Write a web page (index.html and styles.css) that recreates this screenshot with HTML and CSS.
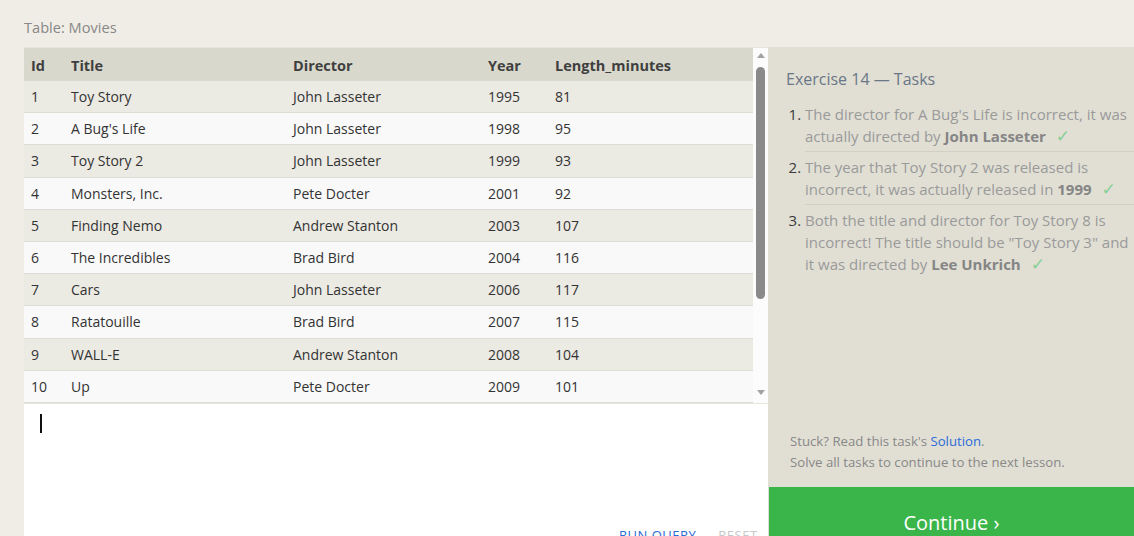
FILE: index.html
```html
<!DOCTYPE html>
<html>
<head>
<meta charset="utf-8">
<link rel="stylesheet" href="styles.css">
</head>
<body>
<div class="page">
  <div class="top">
    <div class="table-label">Table: Movies</div>
  </div>
  <div class="main">
    <div class="left">
      <div class="results">
        <table class="grid">
          <colgroup>
            <col class="c-id"><col class="c-title"><col class="c-dir"><col class="c-year"><col>
          </colgroup>
          <thead>
            <tr><th>Id</th><th>Title</th><th>Director</th><th>Year</th><th>Length_minutes</th></tr>
          </thead>
          <tbody>
            <tr><td>1</td><td>Toy Story</td><td>John Lasseter</td><td>1995</td><td>81</td></tr>
            <tr><td>2</td><td>A Bug's Life</td><td>John Lasseter</td><td>1998</td><td>95</td></tr>
            <tr><td>3</td><td>Toy Story 2</td><td>John Lasseter</td><td>1999</td><td>93</td></tr>
            <tr><td>4</td><td>Monsters, Inc.</td><td>Pete Docter</td><td>2001</td><td>92</td></tr>
            <tr><td>5</td><td>Finding Nemo</td><td>Andrew Stanton</td><td>2003</td><td>107</td></tr>
            <tr><td>6</td><td>The Incredibles</td><td>Brad Bird</td><td>2004</td><td>116</td></tr>
            <tr><td>7</td><td>Cars</td><td>John Lasseter</td><td>2006</td><td>117</td></tr>
            <tr><td>8</td><td>Ratatouille</td><td>Brad Bird</td><td>2007</td><td>115</td></tr>
            <tr><td>9</td><td>WALL-E</td><td>Andrew Stanton</td><td>2008</td><td>104</td></tr>
            <tr><td>10</td><td>Up</td><td>Pete Docter</td><td>2009</td><td>101</td></tr>
          </tbody>
        </table>
        <div class="scrollbar">
          <div class="arrow up"></div>
          <div class="thumb"></div>
          <div class="track"></div>
          <div class="arrow down"></div>
        </div>
      </div>
      <div class="editor">
        <div class="caret"></div>
        <div class="editor-space"></div>
        <div class="actions">
          <span class="run">RUN QUERY</span>
          <span class="reset">RESET</span>
        </div>
      </div>
    </div>
    <div class="right">
      <div class="tasks">
        <h2 class="tasks-title">Exercise 14 — Tasks</h2>
        <ol class="task-list">
          <li>The director for A Bug's Life is incorrect, it was actually directed by <b>John Lasseter</b> <span class="check">✓</span></li>
          <li>The year that Toy Story 2 was released is incorrect, it was actually released in <b>1999</b> <span class="check">✓</span></li>
          <li>Both the title and director for Toy Story 8 is incorrect! The title should be "Toy Story 3" and it was directed by <b>Lee Unkrich</b> <span class="check">✓</span></li>
        </ol>
      </div>
      <div class="help">
        <p>Stuck? Read this task's <a class="solution">Solution</a>.</p>
        <p>Solve all tasks to continue to the next lesson.</p>
      </div>
      <div class="continue">Continue ›</div>
    </div>
  </div>
</div>
</body>
</html>
```

FILE: styles.css
```css
html, body {
  margin: 0;
  padding: 0;
  height: 100%;
  overflow: hidden;
}
body {
  background: #f0ede6;
  font-family: "Open Sans", "Noto Sans", sans-serif;
  color: #333;
}
.page {
  display: flex;
  flex-direction: column;
}
.top {
  height: 47px;
  padding-left: 24px;
  display: flex;
  align-items: center;
}
.table-label {
  font-size: 14.6px;
  color: #888;
  margin-top: 7px;
}
.main {
  display: flex;
  height: 510px;
  padding-left: 24px;
}
.left {
  width: 744px;
  display: flex;
  flex-direction: column;
}
.results {
  display: flex;
  height: 356px;
  border-top: 1px solid #e6e5de;
  box-sizing: border-box;
}
.grid {
  width: 729px;
  table-layout: fixed;
  border-collapse: collapse;
  font-size: 14px;
}
.c-id { width: 40px; }
.c-title { width: 222px; }
.c-dir { width: 195px; }
.c-year { width: 67px; }
.grid th, .grid td {
  text-align: left;
  padding: 0 0 0 7px;
  white-space: nowrap;
  overflow: hidden;
}
.grid th {
  height: 33px;
  padding-top: 2px;
  box-sizing: border-box;
  background: #d9d8cc;
  color: #3f3f3f;
  font-weight: 700;
  font-size: 14.5px;
}
.grid td {
  height: 31px;
  border-bottom: 1px solid #dddcd5;
  color: #333;
}
.grid tbody tr:nth-child(odd) td { background: #ebeae3; }
.grid tbody tr:nth-child(even) td { background: #f9f9f9; }
.scrollbar {
  width: 15px;
  background: #fcfcfc;
  display: flex;
  flex-direction: column;
  align-items: center;
}
.arrow {
  width: 0;
  height: 0;
  border-left: 4px solid transparent;
  border-right: 4px solid transparent;
}
.arrow.up {
  border-bottom: 5px solid #a3a3a3;
  margin-top: 5px;
}
.arrow.down {
  border-top: 5px solid #a3a3a3;
  margin-bottom: 8px;
}
.thumb {
  width: 9px;
  height: 232px;
  margin-top: 9px;
  background: #8a8a8a;
  border-radius: 5px;
}
.track { flex: 1; }
.editor {
  flex: 1;
  background: #fff;
  display: flex;
  flex-direction: column;
  padding: 10px 0 0 16px;
  border-top: 1px solid #e6e5de;
}
.caret {
  width: 2px;
  height: 19px;
  background: #111;
}
.editor-space { height: 93px; }
.actions {
  display: flex;
  gap: 22px;
  padding-left: 579px;
  font-size: 13px;
  letter-spacing: 0.5px;
}
.run { color: #2a6bd6; }
.reset { color: #c8c8c8; }
.right {
  width: 366px;
  background: #e1dfd4;
  display: flex;
  flex-direction: column;
}
.tasks {
  padding: 18px 0 0 18px;
  flex: 1;
}
.tasks-title {
  margin: 0 0 6px 0;
  font-size: 16px;
  font-weight: 400;
  color: #6a7786;
  line-height: 28px;
}
.task-list {
  margin: 0;
  padding: 0 0 0 19px;
  font-size: 15px;
  line-height: 22px;
  color: #9a9a9a;
}
.task-list li {
  padding: 4px 0 4px 0;
  border-bottom: 1px solid #d2d0c5;
}
.task-list li:last-child { border-bottom: none; }
.task-list li::marker { color: #3a3a3a; }
.task-list b { color: #858585; }
.check {
  color: #86d096;
  margin-left: 6px;
  font-family: "DejaVu Sans", sans-serif;
  font-size: 17px;
  line-height: 1;
}
.help {
  padding: 0 0 14px 22px;
  font-size: 13.2px;
  line-height: 21px;
  color: #888;
}
.help p { margin: 0; }
.solution { color: #2a6ad8; }
.continue {
  height: 70px;
  background: #3ab54a;
  color: #fff;
  font-size: 20px;
  display: flex;
  align-items: center;
  justify-content: center;
  margin-left: 1px;
}
```
